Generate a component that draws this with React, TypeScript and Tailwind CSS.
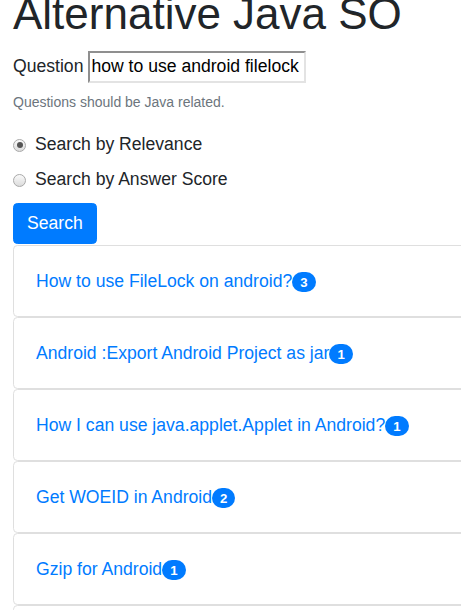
import React from 'react';

interface Result {
    title: string;
    answers: number;
}

const results: Result[] = [
    { title: 'How to use FileLock on android?', answers: 3 },
    { title: 'Android :Export Android Project as jar', answers: 1 },
    { title: 'How I can use java.applet.Applet in Android?', answers: 1 },
    { title: 'Get WOEID in Android', answers: 2 },
    { title: 'Gzip for Android', answers: 1 },
    { title: 'Android Filelock example', answers: 1 },
];

const Radio: React.FC<{ checked?: boolean; label: string }> = ({ checked, label }) => (
    <label className="flex items-center h-[26px]">
        <span className="w-[13px] h-[13px] rounded-full border border-[#a9a9a9] bg-gradient-to-b from-[#fafafa] to-[#dcdcdc] flex items-center justify-center mr-[9px] mt-[1px]">
            {checked && <span className="w-[6px] h-[6px] rounded-full bg-[#555]" />}
        </span>
        <span>{label}</span>
    </label>
);

export default function App() {
    return (
        <div
            className="h-[610px] w-[461px] overflow-hidden bg-white text-[#212529] text-[17.6px] leading-[1.5]"
            style={{ fontFamily: '"Liberation Sans", Arial, sans-serif' }}
        >
            <div className="w-[560px] pl-[13px] -mt-[12px]">
                <h1 className="text-[44px] leading-[1.2] font-normal mb-[8.8px]">Alternative Java SO</h1>

                <div className="flex items-center h-[34px]">
                    <span className="mr-[5px]">Question</span>
                    <div className="w-[218px] h-[32px] border-2 border-t-[#8f8f8f] border-l-[#8f8f8f] border-b-[#e3e3e3] border-r-[#e3e3e3] flex items-center px-[1px] text-black">
                        how to use android filelock
                    </div>
                </div>

                <p className="text-[14px] text-[#6c757d] mt-[8px] mb-[19px]">Questions should be Java related.</p>

                <div className="flex flex-col gap-[9px]">
                    <Radio checked label="Search by Relevance" />
                    <Radio label="Search by Answer Score" />
                </div>

                <button className="mt-[10px] h-[41px] px-[13px] bg-[#007bff] text-white rounded-[4.4px] border border-[#007bff]">
                    Search
                </button>

                <div className="flex flex-col mt-[1px]">
                    {results.map((r) => (
                        <div key={r.title} className="border border-[#dfdfdf] rounded-[4.4px] p-[22px] h-[72px]">
                            <a className="text-[#007bff]">{r.title}</a>
                            <span className="inline-block bg-[#007bff] text-white font-bold text-[13.2px] leading-none px-[8px] py-[3.3px] rounded-full align-baseline">
                                {r.answers}
                            </span>
                        </div>
                    ))}
                </div>
            </div>
        </div>
    );
}
